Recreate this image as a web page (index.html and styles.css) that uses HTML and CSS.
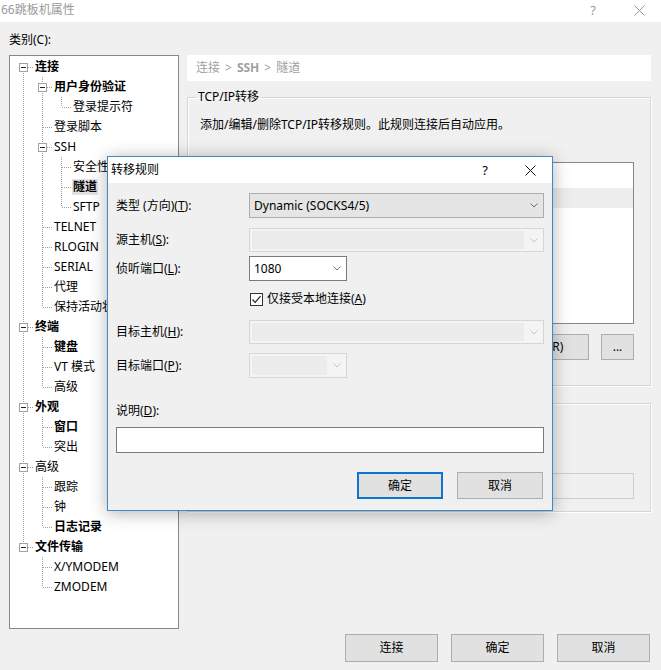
FILE: index.html
```html
<!DOCTYPE html>
<html lang="zh-CN">
<head>
<meta charset="utf-8">
<title>66跳板机属性</title>
<link rel="stylesheet" href="styles.css">
</head>
<body>
<div class="window">
  <div class="titlebar">
    <span class="title">66跳板机属性</span>
    <span class="help">?</span>
    <span class="close"><svg width="11" height="11" viewBox="0 0 11 11"><path d="M0.5 0.5L10.5 10.5M10.5 0.5L0.5 10.5" stroke="#9a9a9a" stroke-width="1" fill="none"/></svg></span>
  </div>
  <div class="content">
    <div class="cat-label">类别(C):</div>
    <div class="main">
      <div class="tree">
        <div class="trow"><span class="cell f"><i class="exp"></i></span><span class="lbl b">连接</span></div>
        <div class="trow"><span class="cell v"></span><span class="cell t"><i class="exp"></i></span><span class="lbl b">用户身份验证</span></div>
        <div class="trow"><span class="cell v"></span><span class="cell v"></span><span class="cell l"></span><span class="lbl">登录提示符</span></div>
        <div class="trow"><span class="cell v"></span><span class="cell t"></span><span class="lbl">登录脚本</span></div>
        <div class="trow"><span class="cell v"></span><span class="cell t"><i class="exp"></i></span><span class="lbl">SSH</span></div>
        <div class="trow"><span class="cell v"></span><span class="cell v"></span><span class="cell t"></span><span class="lbl">安全性</span></div>
        <div class="trow"><span class="cell v"></span><span class="cell v"></span><span class="cell t"></span><span class="lbl b sel">隧道</span></div>
        <div class="trow"><span class="cell v"></span><span class="cell v"></span><span class="cell l"></span><span class="lbl">SFTP</span></div>
        <div class="trow"><span class="cell v"></span><span class="cell t"></span><span class="lbl">TELNET</span></div>
        <div class="trow"><span class="cell v"></span><span class="cell t"></span><span class="lbl">RLOGIN</span></div>
        <div class="trow"><span class="cell v"></span><span class="cell t"></span><span class="lbl">SERIAL</span></div>
        <div class="trow"><span class="cell v"></span><span class="cell t"></span><span class="lbl">代理</span></div>
        <div class="trow"><span class="cell v"></span><span class="cell l"></span><span class="lbl">保持活动状态</span></div>
        <div class="trow"><span class="cell t"><i class="exp"></i></span><span class="lbl b">终端</span></div>
        <div class="trow"><span class="cell v"></span><span class="cell t"></span><span class="lbl b">键盘</span></div>
        <div class="trow"><span class="cell v"></span><span class="cell t"></span><span class="lbl">VT 模式</span></div>
        <div class="trow"><span class="cell v"></span><span class="cell l"></span><span class="lbl">高级</span></div>
        <div class="trow"><span class="cell t"><i class="exp"></i></span><span class="lbl b">外观</span></div>
        <div class="trow"><span class="cell v"></span><span class="cell t"></span><span class="lbl b">窗口</span></div>
        <div class="trow"><span class="cell v"></span><span class="cell l"></span><span class="lbl">突出</span></div>
        <div class="trow"><span class="cell t"><i class="exp"></i></span><span class="lbl">高级</span></div>
        <div class="trow"><span class="cell v"></span><span class="cell t"></span><span class="lbl">跟踪</span></div>
        <div class="trow"><span class="cell v"></span><span class="cell t"></span><span class="lbl">钟</span></div>
        <div class="trow"><span class="cell v"></span><span class="cell l"></span><span class="lbl b">日志记录</span></div>
        <div class="trow"><span class="cell l"><i class="exp"></i></span><span class="lbl b">文件传输</span></div>
        <div class="trow"><span class="cell"></span><span class="cell t"></span><span class="lbl">X/YMODEM</span></div>
        <div class="trow"><span class="cell"></span><span class="cell l"></span><span class="lbl">ZMODEM</span></div>
      </div>
      <div class="pane">
        <div class="crumb">连接<span class="sep">&gt;</span><b>SSH</b><span class="sep">&gt;</span>隧道</div>
        <fieldset class="grp grp1">
          <legend>TCP/IP转移</legend>
          <div class="grp-body g1">
            <div class="desc">添加/编辑/删除TCP/IP转移规则。此规则连接后自动应用。</div>
            <div class="list">
              <div class="list-head"></div>
              <div class="list-row sel-row"></div>
            </div>
            <div class="list-btns">
              <span class="btn lbtn">添加(A)...</span>
              <span class="btn lbtn">编辑(E)...</span>
              <span class="btn lbtn">删除(R)</span>
              <span class="btn dots">...</span>
            </div>
          </div>
        </fieldset>
        <fieldset class="grp grp2">
          <legend>X11转移</legend>
          <div class="grp-body g2">
            <div class="x11-row"></div>
            <div class="x11-box"></div>
          </div>
        </fieldset>
      </div>
    </div>
    <div class="footer">
      <span class="btn fbtn">连接</span>
      <span class="btn fbtn">确定</span>
      <span class="btn fbtn">取消</span>
    </div>
  </div>

  <div class="dialog">
    <div class="dtitle">
      <span>转移规则</span>
      <span class="help">?</span>
      <span class="close"><svg width="11" height="11" viewBox="0 0 11 11"><path d="M0.5 0.5L10.5 10.5M10.5 0.5L0.5 10.5" stroke="#111" stroke-width="1" fill="none"/></svg></span>
    </div>
    <div class="dbody">
      <div class="frow r-type">
        <span class="flabel">类型 (方向)(<u>T</u>):</span>
        <span class="combo wide active"><span class="ctext">Dynamic (SOCKS4/5)</span><span class="chev"><svg width="8" height="5" viewBox="0 0 8 5"><polyline points="0.5,0.5 4,4 7.5,0.5" fill="none" stroke="#6e6e6e"/></svg></span></span>
      </div>
      <div class="frow r-src">
        <span class="flabel">源主机(<u>S</u>):</span>
        <span class="combo wide dis"><span class="edit"></span><span class="chev"><svg width="8" height="5" viewBox="0 0 8 5"><polyline points="0.5,0.5 4,4 7.5,0.5" fill="none" stroke="#c4c4c4"/></svg></span></span>
      </div>
      <div class="frow r-port">
        <span class="flabel">侦听端口(<u>L</u>):</span>
        <span class="combo narrow edit-white"><span class="ctext">1080</span><span class="chev"><svg width="8" height="5" viewBox="0 0 8 5"><polyline points="0.5,0.5 4,4 7.5,0.5" fill="none" stroke="#7a7a7a"/></svg></span></span>
      </div>
      <div class="frow r-check">
        <span class="flabel"></span>
        <span class="check"><svg width="11" height="11" viewBox="0 0 11 11"><polyline points="1.5,5.5 4.2,8.3 9.5,2.2" fill="none" stroke="#222" stroke-width="1.2"/></svg></span>
        <span class="check-text">仅接受本地连接(<u>A</u>)</span>
      </div>
      <div class="frow r-dhost">
        <span class="flabel">目标主机(<u>H</u>):</span>
        <span class="combo wide dis"><span class="edit"></span><span class="chev"><svg width="8" height="5" viewBox="0 0 8 5"><polyline points="0.5,0.5 4,4 7.5,0.5" fill="none" stroke="#c4c4c4"/></svg></span></span>
      </div>
      <div class="frow r-dport">
        <span class="flabel">目标端口(<u>P</u>):</span>
        <span class="combo narrow dis"><span class="edit"></span><span class="chev"><svg width="8" height="5" viewBox="0 0 8 5"><polyline points="0.5,0.5 4,4 7.5,0.5" fill="none" stroke="#c4c4c4"/></svg></span></span>
      </div>
      <div class="r-desc">说明(<u>D</u>):</div>
      <div class="desc-box"></div>
      <div class="dbtns">
        <span class="btn dbtn default">确定</span>
        <span class="btn dbtn">取消</span>
      </div>
    </div>
  </div>
</div>
</body>
</html>
```

FILE: styles.css
```css
* { box-sizing: border-box; }
html, body { margin: 0; padding: 0; }
body {
  width: 661px;
  height: 670px;
  overflow: hidden;
  background: #f0f0f0;
  font: 12px/16px "Noto Sans", "Noto Sans CJK SC", sans-serif;
  color: #000;
}
.window {
  position: relative;
  width: 661px;
  height: 670px;
  background: #f0f0f0;
}

/* main title bar */
.titlebar {
  height: 22px;
  background: #fff;
  display: flex;
  align-items: center;
  color: #9a9a9a;
  padding-bottom: 2px;
}
.titlebar .title { padding-left: 1px; }
.titlebar .help { margin-left: auto; width: 20px; text-align: center; font-size: 13px; }
.titlebar .close { width: 20px; margin: 0 12px 0 26px; display: flex; justify-content: center; }

.content { padding: 10px 10px 0 9px; }
.cat-label { height: 16px; }
.main { display: flex; gap: 8px; margin-top: 7px; height: 574px; }

/* tree */
.tree {
  --dv: repeating-linear-gradient(to bottom, #a0a0a0 0 1px, transparent 1px 2px);
  --dh: repeating-linear-gradient(to right, #a0a0a0 0 1px, transparent 1px 2px);
  width: 170px;
  flex: none;
  background: #fff;
  border: 1px solid #828790;
  padding: 1px 0 0 4px;
}
.trow { display: flex; height: 20px; align-items: center; }
.cell { display: block; width: 19px; height: 20px; flex: none; }
.cell.v { background: var(--dv) 9px 0 / 1px 100% no-repeat; }
.cell.t { background: var(--dv) 9px 0 / 1px 100% no-repeat, var(--dh) 10px 10px / 9px 1px no-repeat; }
.cell.l { background: var(--dv) 9px 0 / 1px 10px no-repeat, var(--dh) 10px 10px / 9px 1px no-repeat; }
.cell.f { background: var(--dv) 9px 10px / 1px 10px no-repeat, var(--dh) 10px 10px / 9px 1px no-repeat; }
.exp {
  display: block;
  width: 9px;
  height: 9px;
  margin: 6px 0 0 5px;
  border: 1px solid #a0a0a0;
  background: #fff;
}
.exp::before {
  content: "";
  display: block;
  width: 5px;
  height: 1px;
  margin: 3px 0 0 1px;
  background: #222;
}
.lbl { margin-left: 1px; padding: 0 1px; line-height: 16px; white-space: nowrap; }
.lbl.b { font-weight: 700; }
.lbl.sel { background: #e2e2e2; }

/* right pane */
.pane { flex: 1; display: flex; flex-direction: column; min-width: 0; }
.crumb {
  height: 26px;
  background: #fff;
  display: flex;
  align-items: center;
  padding-left: 9px;
  color: #a0a0a0;
}
.crumb .sep { margin: 0 5px; }
.crumb b { font-weight: 700; }

.grp {
  margin: 0;
  padding: 0;
  min-width: 0;
  border: 1px solid #d5d5d5;
  box-shadow: inset 1px 1px 0 #fff, 1px 1px 0 #fff;
}
.grp legend { margin-left: 8px; padding: 0 2px; line-height: 16px; }
.grp1 { margin-top: 8px; }
.grp2 { margin-top: 9px; }
.grp-body { padding: 12px 16px 0 12px; }
.g1 { padding-bottom: 25px; }
.g2 { padding-bottom: 12px; }
.desc { height: 16px; white-space: nowrap; }
.list {
  margin-top: 29px;
  height: 162px;
  border: 1px solid #828790;
  background: #fff;
}
.list-head { height: 24px; }
.list-row { height: 20px; }
.sel-row { background: #ededed; margin-top: 1px; }
.list-btns { display: flex; justify-content: flex-end; margin-top: 10px; gap: 8px; }
.list-btns .lbtn { width: 90px; height: 26px; }
.list-btns .lbtn:nth-child(3) { margin-right: 4px; }
.list-btns .dots { width: 33px; height: 26px; }

.x11-row { height: 16px; margin-top: 12px; }
.x11-box {
  margin-top: 22px;
  height: 26px;
  border: 1px solid #cfcfcf;
  background: #f0f0f0;
}

.btn {
  display: flex;
  align-items: center;
  justify-content: center;
  background: #e1e1e1;
  border: 1px solid #adadad;
  white-space: nowrap;
}
.footer { display: flex; justify-content: flex-end; gap: 13px; margin-top: 5px; padding-right: 1px; }
.fbtn { width: 93px; height: 28px; }

/* dialog */
.dialog {
  position: absolute;
  left: 107px;
  top: 156px;
  width: 446px;
  border: 1px solid #3f89c8;
  background: #f0f0f0;
  box-shadow: 0 2px 16px rgba(0, 0, 0, 0.3);
}
.dtitle {
  height: 26px;
  background: #fff;
  display: flex;
  align-items: center;
  padding-left: 3px;
}
.dtitle .help { margin-left: auto; width: 20px; text-align: center; font-size: 13px; }
.dtitle .close { width: 20px; margin: 0 12px 0 25px; display: flex; justify-content: center; }
.dbody { padding: 10px 8px 11px 8px; }
.frow { display: flex; align-items: center; }
.flabel { width: 133px; flex: none; white-space: nowrap; }
.r-type { height: 25px; }
.r-src { height: 24px; margin-top: 10px; }
.r-port { height: 25px; margin-top: 4px; }
.r-check { height: 16px; margin-top: 10px; }
.r-dhost { height: 24px; margin-top: 13px; }
.r-dport { height: 25px; margin-top: 9px; }
.r-desc { height: 16px; margin-top: 25px; }

.combo {
  display: flex;
  align-items: center;
  height: 100%;
  border: 1px solid #acacac;
}
.combo.wide { flex: 1; }
.combo.narrow { width: 98px; flex: none; }
.combo.active { background: #e5e5e5; }
.combo.edit-white { background: #fff; border-color: #7a7a7a; }
.combo.dis { background: #f4f4f4; border-color: #d6d6d6; }
.ctext { padding-left: 4px; white-space: nowrap; }
.combo .edit { flex: 1; align-self: stretch; margin: 2px 0 2px 2px; background: #ececec; }
.chev { margin-left: auto; width: 19px; flex: none; display: flex; justify-content: center; }
.combo.dis .chev { margin-left: 0; }

.check {
  width: 13px;
  height: 13px;
  margin-left: 1px;
  border: 1px solid #333;
  background: #fff;
  display: flex;
  align-items: center;
  justify-content: center;
}
.check-text { margin-left: 4px; white-space: nowrap; }

.desc-box {
  margin-top: 8px;
  height: 26px;
  border: 1px solid #7a7a7a;
  background: #fff;
}
.dbtns { display: flex; justify-content: flex-end; gap: 14px; margin-top: 19px; padding-right: 1px; }
.dbtn { width: 86px; height: 27px; }
.dbtn.default { border: 2px solid #0a74d0; }
```
